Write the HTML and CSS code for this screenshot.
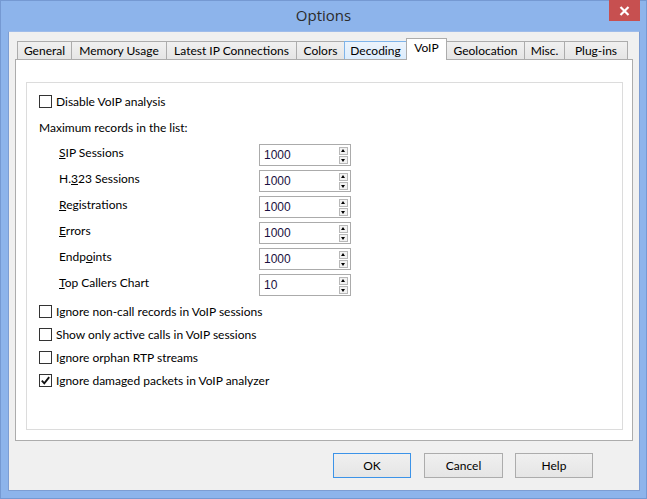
FILE: index.html
```html
<!DOCTYPE html>
<html>
<head>
<meta charset="utf-8">
<link rel="stylesheet" href="styles.css">
</head>
<body>
<div class="window">
  <div class="titlebar">
    <div class="title">Options</div>
    <div class="close"><svg width="11" height="10" viewBox="0 0 11 10"><path d="M1.5 1 L9.5 9 M9.5 1 L1.5 9" stroke="#fff" stroke-width="2.2" fill="none"/></svg></div>
  </div>
  <div class="client">
    <div class="tabs">
      <div class="tab w-general">General</div>
      <div class="tab w-memory">Memory Usage</div>
      <div class="tab w-latest">Latest IP Connections</div>
      <div class="tab w-colors">Colors</div>
      <div class="tab hover w-decoding">Decoding</div>
      <div class="tab selected w-voip">VoIP</div>
      <div class="tab w-geo">Geolocation</div>
      <div class="tab w-misc">Misc.</div>
      <div class="tab w-plug">Plug-ins</div>
    </div>
    <div class="panel">
      <div class="group">
        <div class="row check-row first"><span class="cb"></span><span>Disable VoIP analysis</span></div>
        <div class="row heading">Maximum records in the list:</div>
        <div class="row spin-row"><span class="lbl"><u>S</u>IP Sessions</span><div class="spin"><span class="val">1000</span><span class="btns"><span class="sb up"></span><span class="sb down"></span></span></div></div>
        <div class="row spin-row"><span class="lbl">H.<u>3</u>23 Sessions</span><div class="spin"><span class="val">1000</span><span class="btns"><span class="sb up"></span><span class="sb down"></span></span></div></div>
        <div class="row spin-row"><span class="lbl"><u>R</u>egistrations</span><div class="spin"><span class="val">1000</span><span class="btns"><span class="sb up"></span><span class="sb down"></span></span></div></div>
        <div class="row spin-row"><span class="lbl"><u>E</u>rrors</span><div class="spin"><span class="val">1000</span><span class="btns"><span class="sb up"></span><span class="sb down"></span></span></div></div>
        <div class="row spin-row"><span class="lbl">Endp<u>o</u>ints</span><div class="spin"><span class="val">1000</span><span class="btns"><span class="sb up"></span><span class="sb down"></span></span></div></div>
        <div class="row spin-row"><span class="lbl"><u>T</u>op Callers Chart</span><div class="spin"><span class="val">10</span><span class="btns"><span class="sb up"></span><span class="sb down"></span></span></div></div>
        <div class="row check-row gap"><span class="cb"></span><span>Ignore non-call records in VoIP sessions</span></div>
        <div class="row check-row"><span class="cb"></span><span>Show only active calls in VoIP sessions</span></div>
        <div class="row check-row"><span class="cb"></span><span>Ignore orphan RTP streams</span></div>
        <div class="row check-row"><span class="cb checked"><svg width="11" height="11" viewBox="0 0 11 11"><path d="M1.8 5.6 L4.3 8.3 L9.2 2.2" stroke="#111" stroke-width="1.9" fill="none"/></svg></span><span>Ignore damaged packets in VoIP analyzer</span></div>
      </div>
    </div>
    <div class="buttons">
      <div class="btn default">OK</div>
      <div class="btn cancel">Cancel</div>
      <div class="btn help">Help</div>
    </div>
  </div>
</div>
</body>
</html>
```

FILE: styles.css
```css
* { box-sizing: border-box; }
html, body { margin: 0; padding: 0; }
body {
  width: 647px; height: 499px; overflow: hidden;
  font-family: Lato, "Liberation Sans", sans-serif;
  font-size: 12px; color: #000;
}
.window {
  width: 647px; height: 499px;
  background: #8db4eb;
  border: 1px solid #7599d2;
  display: flex; flex-direction: column;
}
.titlebar {
  height: 30px; position: relative;
  display: flex; justify-content: center; align-items: center;
}
.title {
  font-size: 15px; color: #2b2b2b; margin-top: -2px;
  font-family: "Open Sans", "Noto Sans", sans-serif;
}
.close {
  position: absolute; right: 6px; top: -1px;
  width: 31px; height: 21px; background: #c75050;
  display: flex; align-items: center; justify-content: center;
}
.client {
  margin: 0 6px 0 7px;
  width: 632px; height: 460px;
  background: #f0f0f0;
  border: 1px solid #7d9dd2;
  border-top-color: #9fbcea;
  display: flex; flex-direction: column;
}
.tabs {
  display: flex; align-items: flex-end;
  height: 27px; padding-left: 8px; padding-top: 5px;
}
.tab {
  height: 18px;
  border: 1px solid #acacac; border-bottom: none; border-right: none;
  background: linear-gradient(#f0f0f0, #e5e5e5);
  display: flex; align-items: center; justify-content: center;
  white-space: nowrap; padding-bottom: 1px;
}
.tab.w-plug { border-right: 1px solid #acacac; }
.tab.w-voip + .tab { border-left: none; }
.tab.hover {
  background: linear-gradient(#ecf4fc, #dcecfc);
  border-color: #7eb4ea; border-right: 1px solid #7eb4ea;
}
.tab.selected {
  height: 22px; margin-bottom: -1px;
  background: #fff; border: 1px solid #acacac; border-bottom: none;
  position: relative; z-index: 1;
  align-items: flex-start; padding-top: 1px; padding-bottom: 0;
  margin-left: -1px;
}
.w-general { width: 54px; }
.w-memory { width: 95px; }
.w-latest { width: 130px; }
.w-colors { width: 48px; }
.w-decoding { width: 63px; }
.w-voip { width: 41px; }
.w-geo { width: 77px; }
.w-misc { width: 40px; }
.w-plug { width: 64px; }
.panel {
  margin-left: 6px; width: 618px; height: 382px;
  background: #fff; border: 1px solid #acacac;
  padding: 22px 9px 0 10px;
}
.group {
  position: relative;
  height: 348px; border: 1px solid #dcdcdc;
  padding: 7px 0 0 12px;
  display: flex; flex-direction: column;
}
.row { display: flex; align-items: center; }
.check-row { height: 23px; }
.check-row.first { height: 22px; }
.check-row.gap { margin-top: 2px; height: 23px; }
.heading { height: 30px; }
.cb {
  width: 13px; height: 13px; border: 1px solid #333;
  background: #fff; margin-right: 4px; flex: none;
  display: flex; align-items: center; justify-content: center;
}
.spin-row { height: 26px; padding-left: 20px; }
.lbl { width: 200px; position: relative; top: -3px; }
u { text-decoration: underline; text-underline-offset: 1px; }
.spin {
  width: 92px; height: 22px; border: 1px solid #ababab;
  background: #fff;
  display: flex; align-items: center; justify-content: space-between;
  padding: 0 2px 0 4px;
}
.val { font-family: "Liberation Sans", Arial, sans-serif; font-size: 12px; color: #1a1040; }
.btns { display: flex; flex-direction: column; gap: 1px; }
.sb {
  width: 9px; height: 8px; border: 1px solid #b8b8b8;
  background: #f2f2f2; position: relative;
}
.sb::after {
  content: ""; position: absolute; left: 1px; width: 0; height: 0;
  border-left: 2.5px solid transparent; border-right: 2.5px solid transparent;
}
.sb.up::after { top: 1px; border-bottom: 3px solid #000; }
.sb.down::after { top: 2px; border-top: 3px solid #000; }
.buttons {
  display: flex; justify-content: flex-end;
  padding-right: 46px; margin-top: 12px;
}
.btn {
  height: 25px; border: 1px solid #acacac;
  background: linear-gradient(#f0f0f0, #e5e5e5);
  display: flex; align-items: center; justify-content: center;
}
.btn.default { width: 78px; border-color: #3c93e8; margin-right: 13px; }
.btn.cancel { width: 79px; margin-right: 12px; }
.btn.help { width: 78px; }
```
